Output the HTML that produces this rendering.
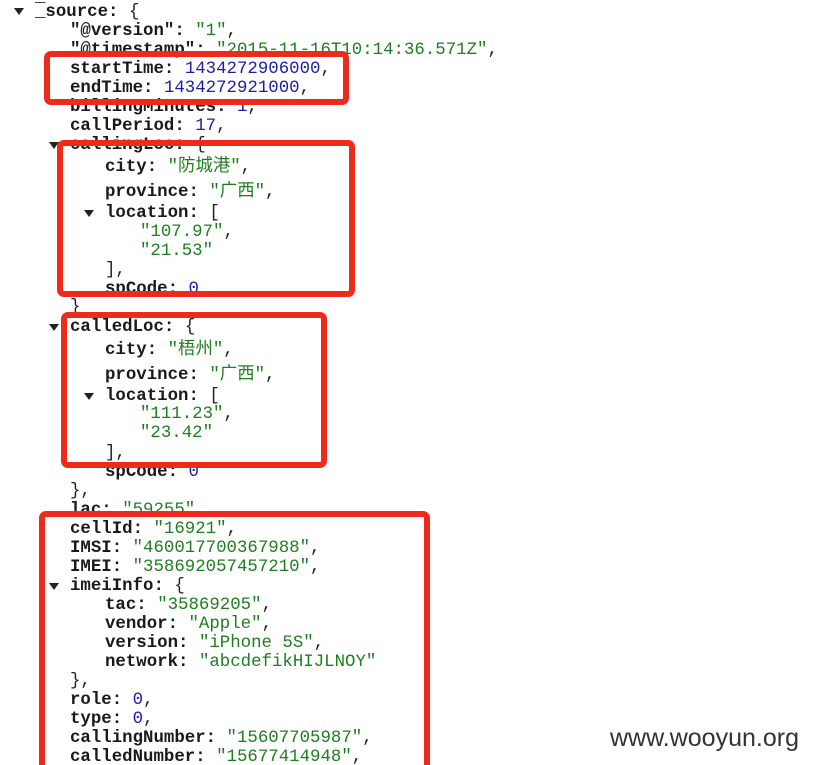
<!DOCTYPE html>
<html><head><meta charset="utf-8"><style>
html{overflow:hidden;height:765px}
body{margin:0;width:815px;height:765px;background:#fff;position:relative;overflow:hidden;font-family:"Liberation Mono","Noto Sans CJK SC",monospace;font-size:17.4px;color:#222}
.l{position:absolute;white-space:pre;line-height:19px;height:19px;top:0}
b{font-weight:bold;color:#1a1a1a}
.s{color:#1f7f1f}
.n{color:#1c1caa}
.t{position:absolute;width:0;height:0;border-left:5px solid transparent;border-right:5px solid transparent;border-top:7px solid #222}
.box{position:absolute;border:6px solid #ee2a1a;border-radius:7px;box-sizing:border-box}
.w{position:absolute;left:610px;top:724px;font-family:"Liberation Sans",sans-serif;font-size:25px;color:#333}
</style></head><body>
<div class="l" style="top:-12px;left:35px"><b>_</b></div>
<div class="t" style="left:14px;top:8px"></div>
<div class="l" style="top:3px;left:35px"><b>_source: </b>{</div>
<div class="l" style="top:22px;left:70px"><b>"@version": </b><span class="s">"1"</span>,</div>
<div class="l" style="top:41px;left:70px"><b>"@timestamp": </b><span class="s">"2015-11-16T10:14:36.571Z"</span>,</div>
<div class="l" style="top:60px;left:70px"><b>startTime: </b><span class="n">1434272906000</span>,</div>
<div class="l" style="top:79px;left:70px"><b>endTime: </b><span class="n">1434272921000</span>,</div>
<div class="l" style="top:98px;left:70px"><b>billingMinutes: </b><span class="n">1</span>,</div>
<div class="l" style="top:117px;left:70px"><b>callPeriod: </b><span class="n">17</span>,</div>
<div class="t" style="left:49px;top:142px"></div>
<div class="l" style="top:136px;left:70px"><b>callingLoc: </b>{</div>
<div class="l" style="top:158px;left:105px"><b>city: </b><span class="s">"防城港"</span>,</div>
<div class="l" style="top:183px;left:105px"><b>province: </b><span class="s">"广西"</span>,</div>
<div class="t" style="left:84px;top:210px"></div>
<div class="l" style="top:204px;left:105px"><b>location: </b>[</div>
<div class="l" style="top:223px;left:140px"><span class="s">"107.97"</span>,</div>
<div class="l" style="top:242px;left:140px"><span class="s">"21.53"</span></div>
<div class="l" style="top:261px;left:105px">],</div>
<div class="l" style="top:280px;left:105px"><b>spCode: </b><span class="n">0</span></div>
<div class="l" style="top:298px;left:70px">}</div>
<div class="t" style="left:49px;top:324px"></div>
<div class="l" style="top:318px;left:70px"><b>calledLoc: </b>{</div>
<div class="l" style="top:341px;left:105px"><b>city: </b><span class="s">"梧州"</span>,</div>
<div class="l" style="top:366px;left:105px"><b>province: </b><span class="s">"广西"</span>,</div>
<div class="t" style="left:84px;top:393px"></div>
<div class="l" style="top:387px;left:105px"><b>location: </b>[</div>
<div class="l" style="top:405px;left:140px"><span class="s">"111.23"</span>,</div>
<div class="l" style="top:424px;left:140px"><span class="s">"23.42"</span></div>
<div class="l" style="top:444px;left:105px">],</div>
<div class="l" style="top:463px;left:105px"><b>spCode: </b><span class="n">0</span></div>
<div class="l" style="top:482px;left:70px">},</div>
<div class="l" style="top:501px;left:70px"><b>lac: </b><span class="s">"59255"</span>,</div>
<div class="l" style="top:520px;left:70px"><b>cellId: </b><span class="s">"16921"</span>,</div>
<div class="l" style="top:539px;left:70px"><b>IMSI: </b><span class="s">"460017700367988"</span>,</div>
<div class="l" style="top:558px;left:70px"><b>IMEI: </b><span class="s">"358692057457210"</span>,</div>
<div class="t" style="left:49px;top:583px"></div>
<div class="l" style="top:577px;left:70px"><b>imeiInfo: </b>{</div>
<div class="l" style="top:596px;left:105px"><b>tac: </b><span class="s">"35869205"</span>,</div>
<div class="l" style="top:615px;left:105px"><b>vendor: </b><span class="s">"Apple"</span>,</div>
<div class="l" style="top:634px;left:105px"><b>version: </b><span class="s">"iPhone 5S"</span>,</div>
<div class="l" style="top:653px;left:105px"><b>network: </b><span class="s">"abcdefikHIJLNOY"</span></div>
<div class="l" style="top:672px;left:70px">},</div>
<div class="l" style="top:691px;left:70px"><b>role: </b><span class="n">0</span>,</div>
<div class="l" style="top:710px;left:70px"><b>type: </b><span class="n">0</span>,</div>
<div class="l" style="top:729px;left:70px"><b>callingNumber: </b><span class="s">"15607705987"</span>,</div>
<div class="l" style="top:748px;left:70px"><b>calledNumber: </b><span class="s">"15677414948"</span>,</div>
<div class="box" style="left:44px;top:51px;width:305px;height:54px"></div>
<div class="box" style="left:57px;top:140px;width:298px;height:157px"></div>
<div class="box" style="left:61px;top:312px;width:266px;height:156px"></div>
<div class="box" style="left:39px;top:511px;width:391px;height:262px"></div>
<div class="w">www.wooyun.org</div>
</body></html>
